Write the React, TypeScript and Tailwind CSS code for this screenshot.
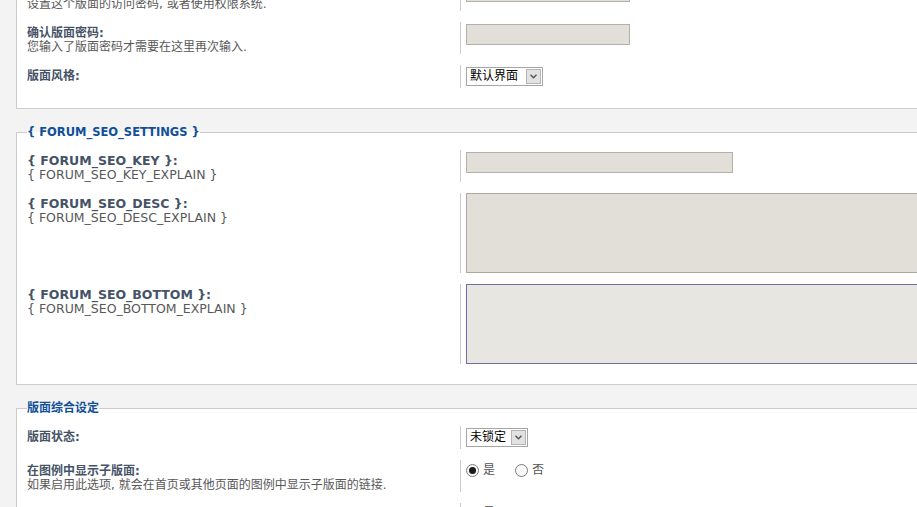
import React from "react";

const FONT = { fontFamily: '"DejaVu Sans", "Noto Sans CJK SC", sans-serif' };

function Row({
  label,
  explain,
  children,
  ddPad = true,
  last = false,
  latin = false,
}: {
  label: string;
  explain?: string;
  children: React.ReactNode;
  ddPad?: boolean;
  last?: boolean;
  latin?: boolean;
}) {
  return (
    <div className={`flex ${last ? "" : "mb-[11px]"}`}>
      <div className="w-[433px] shrink-0 pt-[4px] leading-[14px]">
        <div className={`${latin ? "text-[12.5px]" : "text-[12px]"} font-bold text-[#465366]`}>{label}</div>
        {explain && (
          <div className={`${latin ? "text-[12.5px]" : "text-[12px]"} text-[#585858]`}>{explain}</div>
        )}
      </div>
      <div className={`border-l border-[#cccccc] pl-[5px] ${ddPad ? "py-[2px]" : ""}`}>{children}</div>
    </div>
  );
}

function Input({ w }: { w: string }) {
  return <div className={`${w} h-[21px] border border-[#b4b0a8] bg-[#e2ded8]`} />;
}

function Select({ text, w }: { text: string; w: string }) {
  return (
    <div className={`${w} flex h-[19px] items-stretch border border-[#a5a5a5] bg-white`}>
      <span className="flex-1 pl-[3px] text-[12px] leading-[17px] text-black">{text}</span>
      <div className="m-[1px] flex w-[15px] items-center justify-center border border-[#b5b5b5] bg-[#e2e2e2]">
        <svg width="7" height="5" viewBox="0 0 7 5">
          <path d="M0.5 0.8 L3.5 3.8 L6.5 0.8" fill="none" stroke="#555" strokeWidth="1.4" />
        </svg>
      </div>
    </div>
  );
}

function Radio({ checked }: { checked?: boolean }) {
  return (
    <div className="flex h-[13px] w-[13px] items-center justify-center rounded-full border border-[#7c7c7c] bg-[#f8f8f8]">
      {checked && <div className="h-[7px] w-[7px] rounded-full bg-[#1a1a1a]" />}
    </div>
  );
}

function Radios() {
  return (
    <div className="flex items-center pt-[1px] text-[12px] leading-[14px] text-[#555555]">
      <Radio checked />
      <span className="ml-[4px]">是</span>
      <div className="ml-[20px]">
        <Radio />
      </div>
      <span className="ml-[4px]">否</span>
    </div>
  );
}

export default function App() {
  return (
    <div className="h-[507px] w-[917px] overflow-hidden bg-[#f3f3f3]" style={FONT}>
      <div className="w-[1100px] pl-[16px]">
        {/* fieldset 1 (top cut off) */}
        <div className="-mt-[21px] border-x border-b border-[#cccccc] bg-white pb-[20px] pl-[10px]">
          <Row label="版面密码:" explain="设置这个版面的访问密码, 或者使用权限系统.">
            <Input w="w-[164px]" />
          </Row>
          <Row label="确认版面密码:" explain="您输入了版面密码才需要在这里再次输入.">
            <Input w="w-[164px]" />
          </Row>
          <Row label="版面风格:" last>
            <Select text="默认界面" w="w-[77px]" />
          </Row>
        </div>

        {/* fieldset 2 */}
        <fieldset className="mt-[16px] border border-[#cccccc] bg-white pb-[20px] pl-[10px] pt-[11px]">
          <legend className="p-0 text-[11.5px] font-bold leading-[14px] text-[#115098]">
            {"{ FORUM_SEO_SETTINGS }"}
          </legend>
          <Row latin label="{ FORUM_SEO_KEY }:" explain="{ FORUM_SEO_KEY_EXPLAIN }">
            <Input w="w-[267px]" />
          </Row>
          <Row latin label="{ FORUM_SEO_DESC }:" explain="{ FORUM_SEO_DESC_EXPLAIN }" ddPad={false}>
            <div className="h-[80px] w-[600px] border border-[#aca89f] bg-[#e2ded8]" />
          </Row>
          <Row latin label="{ FORUM_SEO_BOTTOM }:" explain="{ FORUM_SEO_BOTTOM_EXPLAIN }" ddPad={false} last>
            <div className="h-[80px] w-[600px] border border-[#756ca3] bg-[#e8e6e0]" />
          </Row>
        </fieldset>

        {/* fieldset 3 */}
        <fieldset className="mt-[16px] border border-[#cccccc] bg-white pb-[20px] pl-[10px] pt-[11px]">
          <legend className="p-0 text-[12px] font-bold leading-[14px] text-[#115098]">版面综合设定</legend>
          <Row label="版面状态:">
            <Select text="未锁定" w="w-[62px]" />
          </Row>
          <Row label="在图例中显示子版面:" explain="如果启用此选项, 就会在首页或其他页面的图例中显示子版面的链接.">
            <Radios />
          </Row>
          <Row label="在版面列表中显示:" explain="在首页上的版面列表中显示此版面." last>
            <Radios />
          </Row>
        </fieldset>
      </div>
    </div>
  );
}
